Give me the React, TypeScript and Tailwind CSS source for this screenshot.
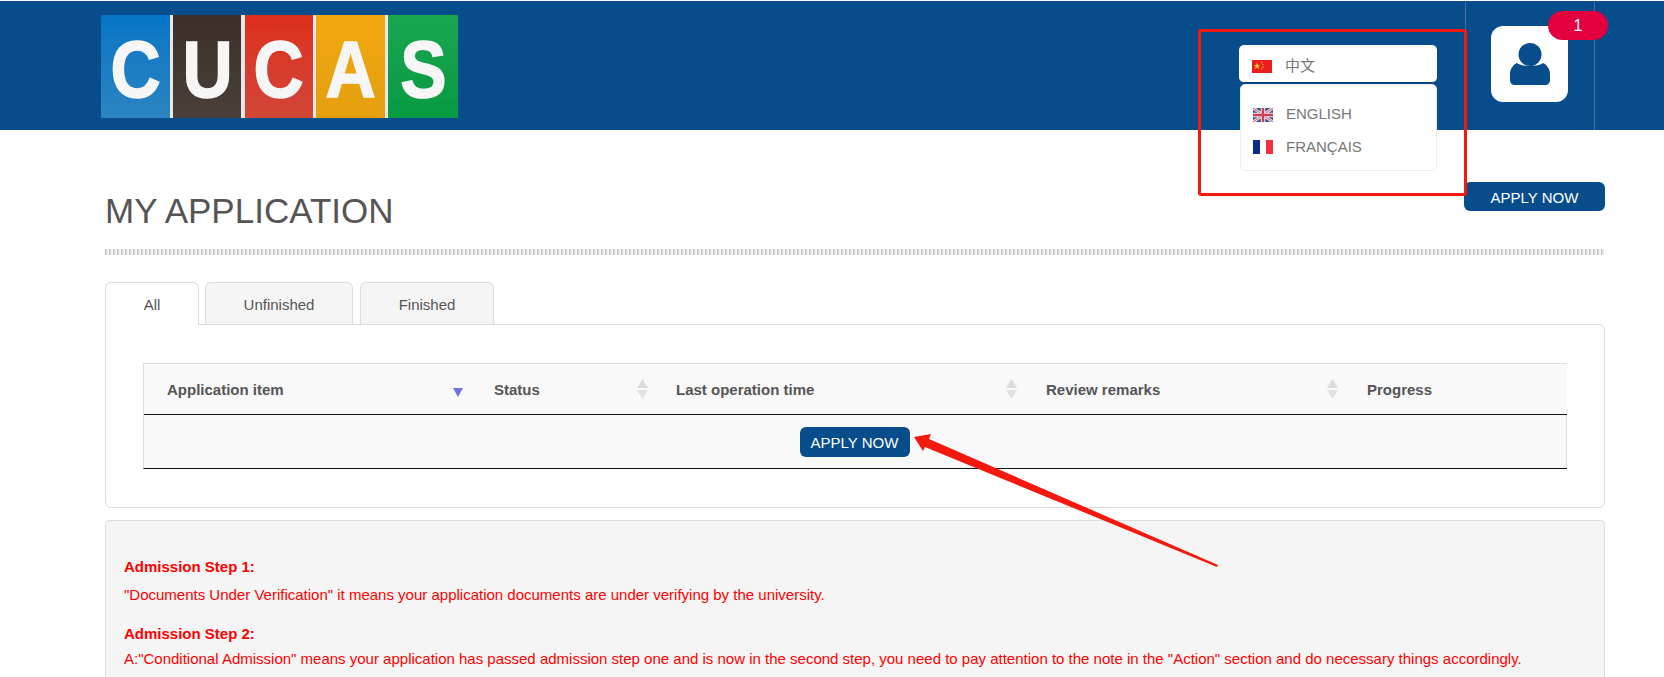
import React from "react";

const navy = "bg-[#084d8b]";

const logoTiles = [
  { letter: "C", cls: "w-[69px] bg-linear-to-b from-[#0475c6] to-[#2a84c0]" },
  { letter: "U", cls: "w-[68px] bg-linear-to-b from-[#3c2f2a] to-[#4a3f39]" },
  { letter: "C", cls: "w-[68px] bg-linear-to-b from-[#de2e1c] to-[#d14638]" },
  { letter: "A", cls: "w-[69px] bg-linear-to-b from-[#f1a90f] to-[#e49f10]" },
  { letter: "S", cls: "w-[70px] bg-linear-to-b from-[#1aa551] to-[#069a42]" },
];

const columns = [
  { title: "Application item", cls: "w-[329px] pl-[23px] pr-[10px]", sort: "active" },
  { title: "Status", cls: "w-[182px] pl-[21px] pr-[7px]", sort: "both" },
  { title: "Last operation time", cls: "w-[370px] pl-[21px] pr-[8px]", sort: "both" },
  { title: "Review remarks", cls: "w-[321px] pl-[21px] pr-[8px]", sort: "both" },
  { title: "Progress", cls: "flex-1 pl-[21px]", sort: "none" },
];

const ChinaFlag = () => (
  <svg width="20" height="13" viewBox="0 0 20 13" className="shrink-0">
    <rect width="20" height="13" fill="#ee1c1c" />
    <polygon points="5,2.6 5.8,5 8.2,5 6.3,6.5 7,8.9 5,7.4 3,8.9 3.7,6.5 1.8,5 4.2,5" fill="#ffdb3a" />
    <circle cx="9.6" cy="2.4" r="0.7" fill="#f7b92e" />
    <circle cx="11" cy="4.4" r="0.7" fill="#f7b92e" />
    <circle cx="11" cy="7" r="0.7" fill="#f7b92e" />
    <circle cx="9.6" cy="9" r="0.7" fill="#f7b92e" />
  </svg>
);

const UkFlag = () => (
  <svg width="20" height="14" viewBox="0 0 20 14" className="shrink-0">
    <rect width="20" height="14" fill="#3d4f8f" />
    <path d="M0 0 L20 14 M20 0 L0 14" stroke="#e8e4ea" strokeWidth="3" />
    <path d="M0 0 L20 14 M20 0 L0 14" stroke="#c9566b" strokeWidth="1" />
    <path d="M10 0 V14 M0 7 H20" stroke="#eeeaee" strokeWidth="4.5" />
    <path d="M10 0 V14 M0 7 H20" stroke="#cf3f55" strokeWidth="2.4" />
  </svg>
);

const FranceFlag = () => (
  <svg width="20" height="14" viewBox="0 0 20 14" className="shrink-0">
    <rect width="7" height="14" fill="#0b2a8f" />
    <rect x="7" width="6" height="14" fill="#ffffff" />
    <rect x="13" width="7" height="14" fill="#ee3040" />
  </svg>
);

const SortIcon = ({ active }: { active?: boolean }) =>
  active ? (
    <svg width="10" height="10" viewBox="0 0 10 10" className="mt-[8px]">
      <polygon points="0,0 10,0 5,9" fill="#6f74dd" />
    </svg>
  ) : (
    <svg width="11" height="20" viewBox="0 0 11 20">
      <polygon points="5.5,0 11,9 0,9" fill="#dcdcdc" />
      <polygon points="0,11 11,11 5.5,20" fill="#e2e2e2" />
    </svg>
  );

const ApplyButton = ({ className }: { className: string }) => (
  <button className={`${navy} text-white text-[15px] leading-none rounded-md flex items-center justify-center pt-[1px] ${className}`}>
    APPLY NOW
  </button>
);

export default function App() {
  return (
    <div
      className="relative h-screen overflow-hidden bg-white text-[#555]"
      style={{ fontFamily: '"Liberation Sans", "Noto Sans CJK SC", Arial, sans-serif' }}
    >
      {/* top bar */}
      <header className={`${navy} h-[129px] mt-px flex relative`}>
        <div className="ml-[101px] mt-[14px] h-[103px] w-[357px] flex justify-between bg-[#e8e8e8]">
          {logoTiles.map((tile, i) => (
            <div
              key={i}
              className={`${tile.cls} h-full flex items-center justify-center pt-[6px] text-[#f6f6f6] text-[79px] font-bold leading-none`}
            >
              <span className="blur-[0.7px] scale-x-[0.88] [-webkit-text-stroke:1.5px_#f6f6f6]">{tile.letter}</span>
            </div>
          ))}
        </div>
        <div className="ml-auto mr-[69px] flex">
          <div className="w-px bg-[#4a6f9c]" />
          <div className="w-[128px] relative">
            <div className="absolute left-[25px] top-[25px] w-[77px] h-[76px] bg-white rounded-[12px] flex items-center justify-center">
              <svg width="42" height="44" viewBox="0 0 42 44">
                <circle cx="21" cy="12.5" r="11.5" fill="#084d8b" />
                <path
                  d="M8 21 C12 25 30 25 34 21 C38 23 41 27 41 32 V38 C41 41 39 43 36 43 H6 C3 43 1 41 1 38 V32 C1 27 4 23 8 21 Z"
                  fill="#084d8b"
                />
              </svg>
            </div>
            <div className="absolute left-[82px] top-[10px] w-[60px] h-[29px] rounded-full bg-[#e4003f] text-white text-[16px] flex items-center justify-center">
              1
            </div>
          </div>
          <div className="w-px bg-[#4a6f9c]" />
        </div>
      </header>

      {/* language picker with the screenshot's red note frame */}
      <div className="absolute left-[1198px] top-[29px] w-[269px] h-[167px] border-[3px] border-[#f5180f] rounded-[3px] z-10" />
      <div className="absolute left-[1239px] top-[45px] w-[198px] h-[38px] bg-white rounded-[5px] flex items-center pl-[13px] pt-[6px] gap-[13px] text-[15px] text-[#777] border-b border-[#0b3d6d]">
        <ChinaFlag />
        <span>中文</span>
      </div>
      <div className="absolute left-[1240px] top-[84px] w-[197px] h-[87px] bg-white rounded-[5px] border border-[#eee] pt-[13px] text-[15px] text-[#777] flex flex-col">
        <div className="flex items-center h-[33px] pl-[12px] gap-[13px]">
          <UkFlag />
          <span>ENGLISH</span>
        </div>
        <div className="flex items-center h-[32px] pl-[12px] gap-[13px]">
          <FranceFlag />
          <span>FRANÇAIS</span>
        </div>
      </div>

      <main className="ml-[105px] w-[1500px]">
        <div className="h-[119px] flex justify-between items-start">
          <h1 className="text-[35px] leading-none font-normal mt-[63px]">MY APPLICATION</h1>
          <ApplyButton className="w-[141px] h-[29px] mt-[52px]" />
        </div>

        <div className="h-[6px] w-[1499px] bg-[repeating-linear-gradient(90deg,#bbbbbb_0,#bbbbbb_1px,#dddddd_1px,#dddddd_2px,#eeeeee_2px,#eeeeee_3px,#ffffff_3px,#ffffff_4px)]" />

        {/* tabs */}
        <div className="mt-[27px] flex items-start relative z-[1] text-[15px] h-[42px]">
          <div className="w-[94px] h-[43px] pt-[2px] bg-white border border-[#ddd] border-b-0 rounded-t-[6px] flex items-center justify-center">
            All
          </div>
          <div className="ml-[6px] w-[148px] h-[42px] pt-[3px] bg-[#f5f5f5] border border-[#ddd] border-b-0 rounded-t-[6px] flex items-center justify-center">
            Unfinished
          </div>
          <div className="ml-[7px] w-[134px] h-[42px] pt-[3px] bg-[#f5f5f5] border border-[#ddd] border-b-0 rounded-t-[6px] flex items-center justify-center">
            Finished
          </div>
        </div>

        {/* table panel */}
        <section className="h-[184px] border border-[#ddd] rounded-b-[6px] rounded-tr-[6px] pt-[38px] pl-[37px]">
          <div className="w-[1424px] h-[106px] bg-[#f9f9f9] border-t border-l border-[#ddd] border-b border-b-[#111] flex flex-col">
            <div className="h-[51px] flex border-b border-[#111]">
              {columns.map((col) => (
                <div
                  key={col.title}
                  className={`${col.cls} flex items-center justify-between text-[15px] font-bold`}
                >
                  <span className="mt-[2px]">{col.title}</span>
                  {col.sort !== "none" && <SortIcon active={col.sort === "active"} />}
                </div>
              ))}
            </div>
            <div className="flex-1 flex items-center justify-center border-r border-[#ddd]">
              <ApplyButton className="w-[110px] h-[30px] ml-[-1px]" />
            </div>
          </div>
        </section>

        {/* notes */}
        <section className="mt-[12px] h-[200px] bg-[#f5f5f5] border border-[#ddd] rounded-[4px] pt-[36px] pl-[18px] text-[15px] text-[#f00] leading-[20px]">
          <p className="font-bold">Admission Step 1:</p>
          <p className="mt-[8px]">"Documents Under Verification" it means your application documents are under verifying by the university.</p>
          <p className="font-bold mt-[19px]">Admission Step 2:</p>
          <p className="mt-[5px]">A:"Conditional Admission" means your application has passed admission step one and is now in the second step, you need to pay attention to the note in the "Action" section and do necessary things accordingly.</p>
        </section>
      </main>

      {/* red arrow drawn over the screenshot */}
      <svg className="absolute left-0 top-0 pointer-events-none" width="1664" height="677">
        <polygon points="914,437 931,434 929,439 1218,565 1217,567 925,447 923,451" fill="#f5180f" />
      </svg>
    </div>
  );
}
